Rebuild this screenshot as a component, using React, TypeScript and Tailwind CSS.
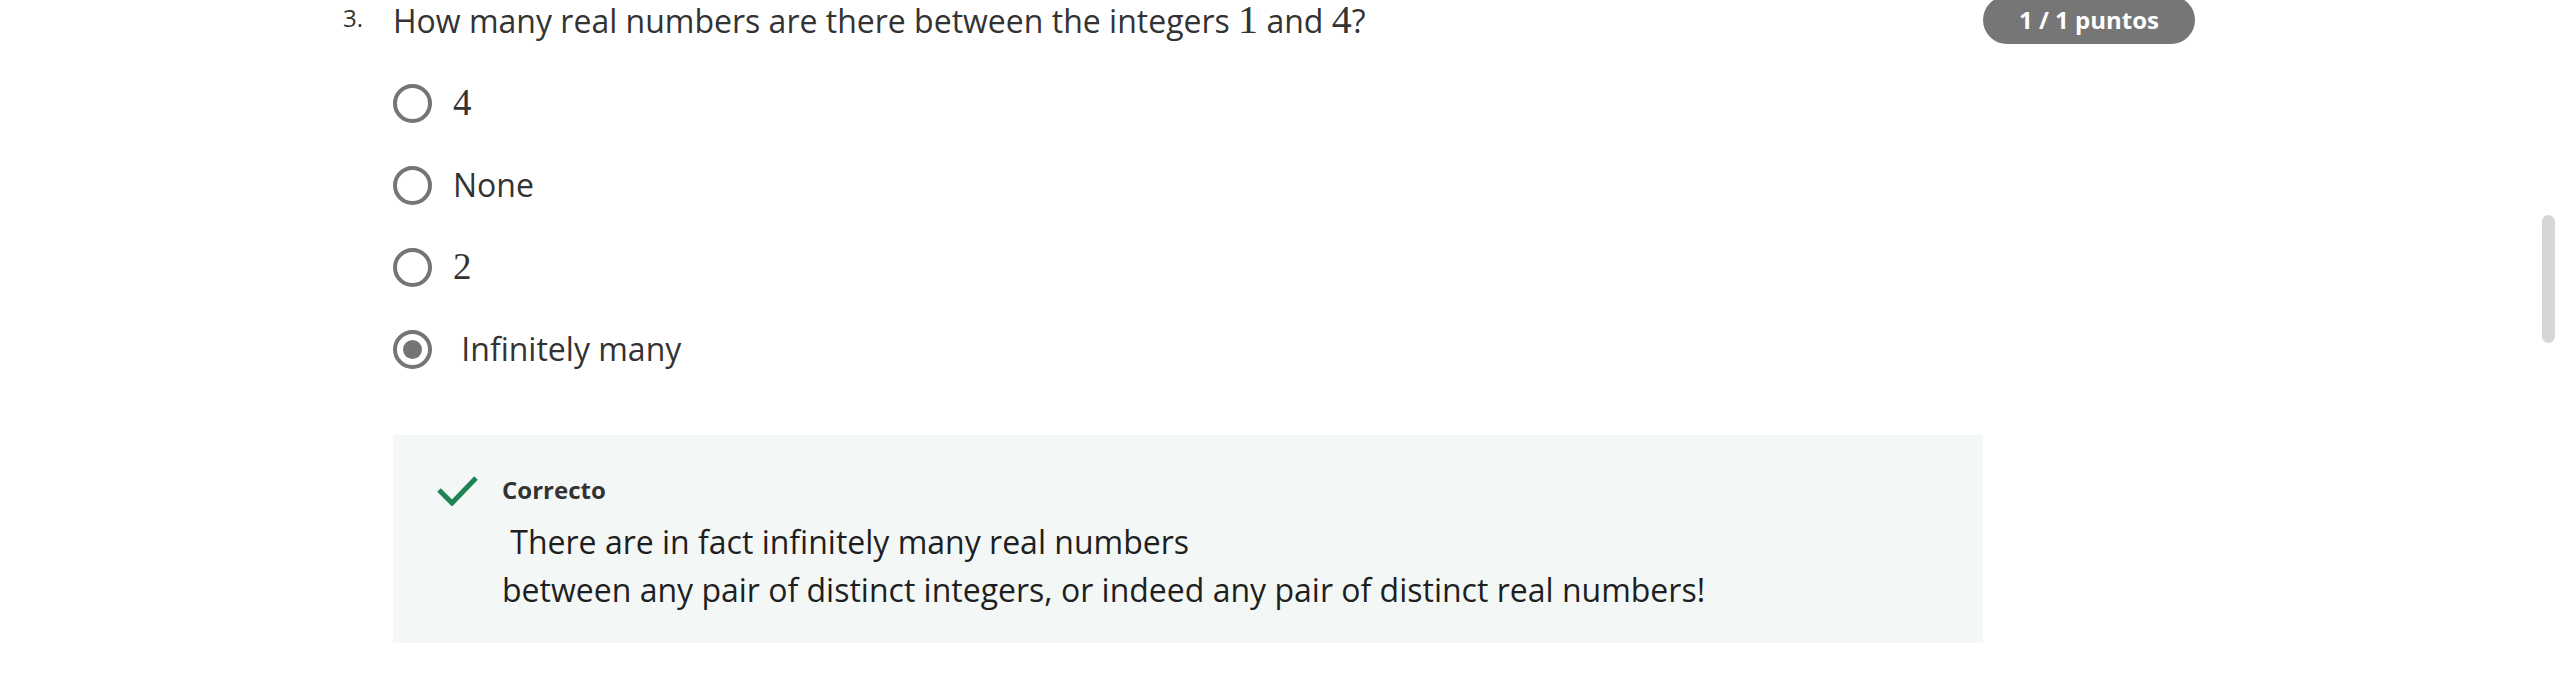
import React from "react";

const options = [
  { id: "a", label: "4", math: true, selected: false },
  { id: "b", label: "None", math: false, selected: false },
  { id: "c", label: "2", math: true, selected: false },
  { id: "d", label: "\u00a0Infinitely many", math: false, selected: true },
];

function Radio({ checked }: { checked: boolean }) {
  return (
    <span className="flex h-[39px] w-[39px] shrink-0 items-center justify-center rounded-full border-4 border-[#757575]">
      {checked && <span className="h-[19px] w-[19px] rounded-full bg-[#757575]" />}
    </span>
  );
}

export default function App() {
  return (
    <div className="relative min-h-screen overflow-hidden bg-white font-['Open_Sans',sans-serif] text-[#333]">
      <div className="ml-[343px] flex w-[1853px] items-start">
        <div className="w-[50px] shrink-0 text-[24px] leading-[36px]">3.</div>

        <div className="w-[1590px] shrink-0">
          <p className="text-[32px] leading-[42px]">
            How many real numbers are there between the integers{" "}
            <span className="font-['Liberation_Serif',serif] text-[40px] leading-[28px]">1</span> and{" "}
            <span className="font-['Liberation_Serif',serif] text-[40px] leading-[28px]">4</span>?
          </p>

          <div className="mt-[20px] flex flex-col">
            {options.map((o) => (
              <label key={o.id} className="flex h-[82px] items-center gap-[21px]">
                <Radio checked={o.selected} />
                {o.math ? (
                  <span className="font-['Liberation_Serif',serif] text-[37px] leading-[48px] text-[#333]">
                    {o.label}
                  </span>
                ) : (
                  <span className="text-[32px] leading-[48px]">{o.label}</span>
                )}
              </label>
            ))}
          </div>

          <div className="mt-[45px] flex h-[208px] bg-[#f3f8f6] pl-[44px] pt-[37px]">
            <svg className="mt-[3px] h-[31px] w-[41px] shrink-0" viewBox="0 0 41 31" fill="none">
              <polyline points="2,15 15,28 39,3" stroke="#1f8354" strokeWidth="5" />
            </svg>
            <div className="ml-[24px]">
              <div className="text-[24px] font-bold leading-[36px] text-[#333]">Correcto</div>
              <div className="mt-[10px] text-[32px] leading-[48px] text-[#1f1f1f]">
                <p>{"\u00a0"}There are in fact infinitely many real numbers</p>
                <p>between any pair of distinct integers, or indeed any pair of distinct real numbers!</p>
              </div>
            </div>
          </div>
        </div>

        <div className="-mt-[4px] flex h-[48px] w-[212px] shrink-0 items-center justify-center rounded-full bg-[#767676] text-[24px] font-bold text-white">
          1 / 1 puntos
        </div>
      </div>

      <div className="absolute right-[5px] top-[215px] h-[128px] w-[13px] rounded-full bg-[#d6d6d6]" />
    </div>
  );
}
